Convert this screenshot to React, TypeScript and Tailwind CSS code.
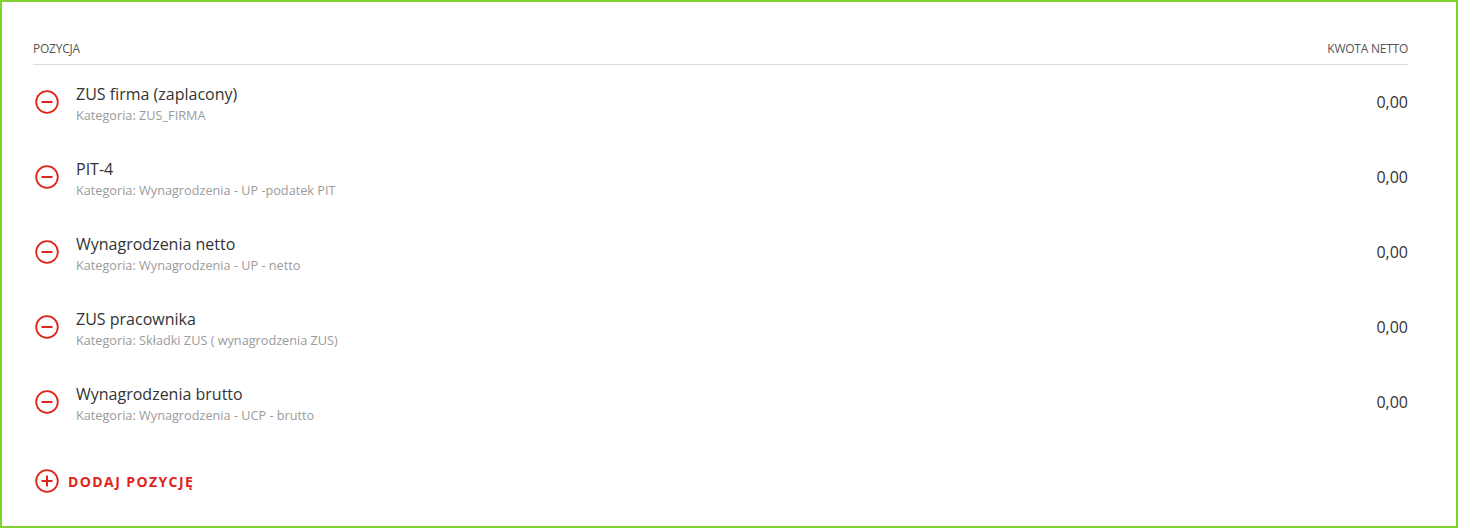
import { Fragment } from "react";

interface Item {
  name: string;
  category: string;
  amount: string;
}

const items: Item[] = [
  { name: "ZUS firma (zaplacony)", category: "ZUS_FIRMA", amount: "0,00" },
  { name: "PIT-4", category: "Wynagrodzenia - UP -podatek PIT", amount: "0,00" },
  { name: "Wynagrodzenia netto", category: "Wynagrodzenia - UP - netto", amount: "0,00" },
  { name: "ZUS pracownika", category: "Składki ZUS ( wynagrodzenia ZUS)", amount: "0,00" },
  { name: "Wynagrodzenia brutto", category: "Wynagrodzenia - UCP - brutto", amount: "0,00" },
];

function CircleIcon({ plus = false }: { plus?: boolean }) {
  return (
    <svg width="24" height="24" viewBox="0 0 24 24" className="flex-shrink-0">
      <circle cx="12" cy="12" r="10.8" fill="none" stroke="#e2231a" strokeWidth="1.8" />
      <line x1="6.5" y1="12" x2="17.5" y2="12" stroke="#e2231a" strokeWidth="2" />
      {plus && <line x1="12" y1="6.5" x2="12" y2="17.5" stroke="#e2231a" strokeWidth="2" />}
    </svg>
  );
}

export default function App() {
  return (
    <div
      className="w-[1458px] h-[528px] border-2 border-[#7ed32f] bg-white pl-[31px] pr-[48px] pt-[38px]"
      style={{ fontFamily: '"Open Sans", "Liberation Sans", sans-serif' }}
    >
      {/* Header */}
      <div className="flex justify-between items-end h-[25px] pb-[6px] border-b border-[#dcdcdc] text-[12px] font-medium text-[#555] tracking-[-0.02em] uppercase">
        <span>Pozycja</span>
        <span>Kwota netto</span>
      </div>

      {/* Rows */}
      {items.map((item) => (
        <Fragment key={item.name}>
          <div className="flex items-center h-[75px] pb-[2px]">
            <div className="pl-[2px] pr-[17px] flex items-center">
              <CircleIcon />
            </div>
            <div className="flex-1 flex flex-col pt-[4px]">
              <span className="text-[16px] leading-[20px] text-[#333]">{item.name}</span>
              <span className="mt-[2px] text-[12.7px] leading-[18px] text-[#9b9b9b]">Kategoria: {item.category}</span>
            </div>
            <span className="text-[16px] text-[#333]">{item.amount}</span>
          </div>
        </Fragment>
      ))}

      {/* Add */}
      <button className="flex items-center gap-[9px] mt-[29px] pl-[2px]">
        <CircleIcon plus />
        <span className="text-[14px] font-bold text-[#e2231a] tracking-[0.1em] uppercase">Dodaj pozycję</span>
      </button>
    </div>
  );
}
